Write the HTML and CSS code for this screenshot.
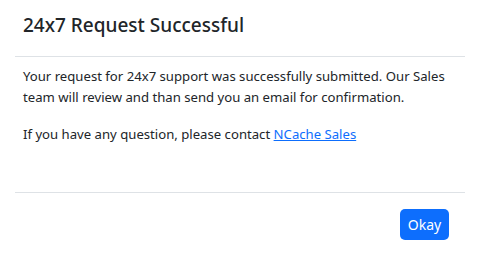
FILE: index.html
```html
<!DOCTYPE html>
<html lang="en">
<head>
  <meta charset="UTF-8" />
  <meta name="viewport" content="width=device-width, initial-scale=1.0"/>
  <title>24x7 Request Successful</title>
  <link rel="stylesheet" href="styles.css">
</head>
<body>
  <div class="modal">
    <div class="modal-header">
      <h4 class="modal-title">24x7 Request Successful</h4>
    </div>

    <div class="modal-body">
      <p>Your request for 24x7 support was successfully submitted. Our Sales team will review and than send you an email for confirmation.</p>
      <p>If you have any question, please contact <a href="#">NCache Sales</a></p>
    </div>

    <div class="modal-footer">
      <button class="btn-okay">Okay</button>
    </div>
  </div>
</body>
</html>
```

FILE: styles.css
```css
body {
  margin: 0;
  font-family: "Noto Sans", "Open Sans", Arial, sans-serif;
  font-size: 13.15px;
  line-height: 21px;
  color: #212529;
  background-color: white;
}

.modal {
  padding: 0 19px 0 15px;
}

.modal-header {
  padding: 10px 8px 16px 8px;
  border-bottom: 1px solid #dee2e6;
}

.modal-title {
  margin: 0;
  font-size: 19px;
  font-weight: 500;
  line-height: 30px;
}

.modal-body {
  padding: 9px 8px 31px 8px;
}

.modal-body p {
  margin: 0 0 16px 0;
}

.modal-body a {
  color: #0d6efd;
}

.modal-footer {
  display: flex;
  justify-content: flex-end;
  padding: 16px 16px 16px 8px;
  border-top: 1px solid #dee2e6;
}

.btn-okay {
  font-family: inherit;
  font-size: 14px;
  color: white;
  background-color: #0d6efd;
  border: none;
  border-radius: 5px;
  padding: 0;
  width: 49px;
  height: 31px;
  cursor: pointer;
}
```
